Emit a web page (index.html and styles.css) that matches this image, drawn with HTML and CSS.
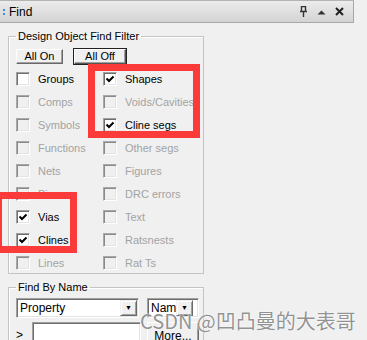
FILE: index.html
```html
<!DOCTYPE html>
<html lang="en">
<head>
    <meta charset="UTF-8">
    <title>Find</title>
    <link rel="stylesheet" href="styles.css">
</head>
<body>
    <div class="window">
        <div class="titlebar">
            <span class="grip"><i></i><i></i></span>
            <span class="title">Find</span>
            <span class="tools">
                <svg class="pin" width="9" height="11" viewBox="0 0 9 11">
                    <path d="M2.5 0.5h4v5h-4z M1 5.5h7 M4.5 6v5" fill="none" stroke="#333" stroke-width="1.4"/>
                </svg>
                <svg class="up" width="9" height="6" viewBox="0 0 9 6"><path d="M0.5 5.5L4.5 1.5L8.5 5.5z" fill="#333"/></svg>
                <svg class="close" width="9" height="9" viewBox="0 0 9 9"><path d="M1 1L8 8M8 1L1 8" stroke="#222" stroke-width="2"/></svg>
            </span>
        </div>

        <div class="panel">
            <fieldset class="group filter">
                <legend>Design Object Find Filter</legend>
                <div class="btnrow">
                    <button class="btn on">All On</button>
                    <button class="btn off default">All Off</button>
                </div>
                <div class="grid">
                    <label class="item"><span class="cb"></span>Groups</label>
                    <label class="item"><span class="cb checked"><svg width="12" height="12" viewBox="0 0 12 12"><path d="M2.5 5.5L5 8L9.5 3.5" fill="none" stroke="#000" stroke-width="2"/></svg></span>Shapes</label>
                    <label class="item off"><span class="cb"></span>Comps</label>
                    <label class="item off"><span class="cb"></span>Voids/Cavities</label>
                    <label class="item off"><span class="cb"></span>Symbols</label>
                    <label class="item"><span class="cb checked"><svg width="12" height="12" viewBox="0 0 12 12"><path d="M2.5 5.5L5 8L9.5 3.5" fill="none" stroke="#000" stroke-width="2"/></svg></span>Cline segs</label>
                    <label class="item off"><span class="cb"></span>Functions</label>
                    <label class="item off"><span class="cb"></span>Other segs</label>
                    <label class="item off"><span class="cb"></span>Nets</label>
                    <label class="item off"><span class="cb"></span>Figures</label>
                    <label class="item off"><span class="cb"></span>Pins</label>
                    <label class="item off"><span class="cb"></span>DRC errors</label>
                    <label class="item"><span class="cb checked"><svg width="12" height="12" viewBox="0 0 12 12"><path d="M2.5 5.5L5 8L9.5 3.5" fill="none" stroke="#000" stroke-width="2"/></svg></span>Vias</label>
                    <label class="item off"><span class="cb"></span>Text</label>
                    <label class="item"><span class="cb checked"><svg width="12" height="12" viewBox="0 0 12 12"><path d="M2.5 5.5L5 8L9.5 3.5" fill="none" stroke="#000" stroke-width="2"/></svg></span>Clines</label>
                    <label class="item off"><span class="cb"></span>Ratsnests</label>
                    <label class="item off"><span class="cb"></span>Lines</label>
                    <label class="item off"><span class="cb"></span>Rat Ts</label>
                </div>
            </fieldset>

            <fieldset class="group byname">
                <legend>Find By Name</legend>
                <div class="row">
                    <div class="combo wide"><span class="value">Property</span><span class="drop">&#9660;</span></div>
                    <div class="combo narrow"><span class="value">Name</span><span class="drop">&#9660;</span></div>
                </div>
                <div class="row">
                    <span class="prompt">&gt;</span>
                    <div class="textbox"></div>
                    <button class="btn more">More...</button>
                </div>
            </fieldset>
        </div>
    </div>

    <!-- annotation boxes drawn over the screenshot -->
    <div class="mark mark-a"></div>
    <div class="mark mark-b"></div>
    <div class="watermark">CSDN @凹凸曼的大表哥</div>
</body>
</html>
```

FILE: styles.css
```css
html, body {
    margin: 0;
    height: 100%;
}

body {
    position: relative;
    background-color: #f0f0f0;
    font-family: "Liberation Sans", Arial, sans-serif;
    font-size: 11px;
    color: #000;
    overflow: hidden;
}

.window {
    width: 354px;
}

.titlebar {
    display: flex;
    align-items: center;
    border-top: 1px solid #b4b4b4;
    border-bottom: 1px solid #a8a8a8;
    border-right: 1px solid #a8a8a8;
    background: linear-gradient(#ececec, #d3d3d3);
    box-sizing: border-box;
    height: 23px;
}

.grip {
    display: flex;
    flex-direction: column;
    gap: 2px;
    margin-left: 3px;
    margin-right: 4px;
}

.grip i {
    display: block;
    width: 2px;
    height: 2px;
    background-color: #3d8fe0;
}

.title {
    font-size: 12px;
    flex: 1;
}

.tools {
    display: flex;
    align-items: center;
    gap: 9px;
    margin-right: 9px;
}

.panel {
    padding: 7px 0 0 8px;
}

.group {
    margin: 0;
    padding: 6px 0 0 7px;
    width: 196px;
    box-sizing: border-box;
    border: 1px solid #c4c4c4;
    box-shadow: inset 1px 1px 0 #fff;
    min-width: 0;
}

.group legend {
    padding: 0 2px;
    margin-left: 0;
    line-height: 13px;
    font-size: 11px;
}

.filter {
    height: 244px;
}

.btnrow {
    display: flex;
    gap: 11px;
    height: 15px;
}

.btn {
    font-family: "Liberation Sans", Arial, sans-serif;
    font-size: 11px;
    padding: 0;
    background-color: #f0f0f0;
    border: 1px solid;
    border-color: #fff #696969 #696969 #fff;
    box-shadow: inset -1px -1px 0 #a0a0a0;
    color: #000;
    line-height: 13px;
}

.btn.on {
    width: 47px;
}

.btn.off {
    width: 52px;
}

.btn.default {
    outline: 1px solid #222;
    outline-offset: 0;
    border-color: #fff #555 #555 #fff;
}

.grid {
    display: grid;
    grid-template-columns: 87px 1fr;
    grid-auto-rows: 22.9px;
    align-items: center;
    margin-top: 4px;
}

.item {
    display: flex;
    align-items: center;
    gap: 8px;
    white-space: nowrap;
}

.item.off {
    color: #a3a3a3;
}

.cb {
    width: 14px;
    height: 14px;
    box-sizing: border-box;
    border: 1px solid;
    border-color: #a0a0a0 #fff #fff #a0a0a0;
    box-shadow: inset 1px 1px 0 #6e6e6e, inset -1px -1px 0 #e3e3e3;
    background-color: #fff;
    display: flex;
    align-items: center;
    justify-content: center;
}

.item.off .cb {
    background-color: #f0f0f0;
    border-color: #a8a8a8 #fff #fff #a8a8a8;
    box-shadow: inset 1px 1px 0 #8a8a8a, inset -1px -1px 0 #e3e3e3;
}

.byname {
    margin-top: 7px;
    padding-top: 4px;
    height: 80px;
}

.row {
    display: flex;
    align-items: flex-start;
    height: 20px;
    margin-bottom: 4px;
}

.combo {
    display: flex;
    align-items: center;
    height: 20px;
    box-sizing: border-box;
    border: 1px solid;
    border-color: #a0a0a0 #fff #fff #a0a0a0;
    box-shadow: inset 1px 1px 0 #6e6e6e, inset -1px -1px 0 #e3e3e3;
    background-color: #fff;
    overflow: hidden;
}

.combo .value {
    flex: 1;
    padding-left: 3px;
    white-space: nowrap;
    overflow: hidden;
    font-size: 12px;
}

.combo .drop {
    width: 17px;
    height: 16px;
    margin-right: 1px;
    box-sizing: border-box;
    background-color: #f0f0f0;
    border: 1px solid;
    border-color: #f0f0f0 #696969 #696969 #f0f0f0;
    box-shadow: inset 1px 1px 0 #fff, inset -1px -1px 0 #a0a0a0;
    font-size: 7px;
    line-height: 14px;
    text-align: center;
}

.combo.wide {
    width: 123px;
}

.combo.narrow {
    width: 52px;
    margin-left: 8px;
}

.combo.narrow .value {
    width: 25px;
    flex: none;
}

.prompt {
    width: 16px;
    padding-top: 6px;
    font-size: 12px;
}

.textbox {
    width: 109px;
    height: 24px;
    box-sizing: border-box;
    border: 1px solid;
    border-color: #a0a0a0 #fff #fff #a0a0a0;
    box-shadow: inset 1px 1px 0 #6e6e6e, inset -1px -1px 0 #e3e3e3;
    background-color: #fff;
}

.btn.more {
    width: 52px;
    height: 24px;
    margin-left: 6px;
    font-size: 12px;
    padding-top: 4px;
}

.mark {
    position: absolute;
    border: 7px solid #fb3a3a;
    box-sizing: border-box;
}

.mark-a {
    left: 88px;
    top: 64px;
    width: 112px;
    height: 74px;
}

.mark-b {
    left: -5px;
    top: 192px;
    width: 82px;
    height: 61px;
}

.watermark {
    position: absolute;
    left: 140px;
    top: 310px;
    font-family: "Noto Sans CJK SC", "Liberation Sans", sans-serif;
    font-size: 20px;
    line-height: 22px;
    color: rgba(110, 110, 110, 0.75);
    text-shadow: 0 0 2px #fff, 0 0 1px #fff;
    white-space: nowrap;
}
```
